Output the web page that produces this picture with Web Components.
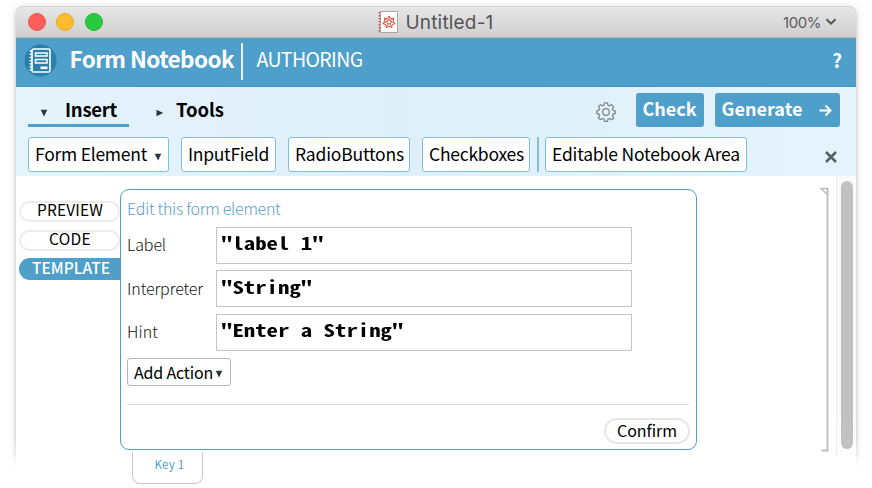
<!DOCTYPE html>
<html lang="en">
<head>
<meta charset="utf-8">
<title>Form Notebook</title>
<style>
html,body{margin:0;height:488px;overflow:hidden;background:#fff}
body{font-family:"Noto Sans CJK JP","Noto Sans",sans-serif;color:#000}
</style>
</head>
<body>
<notebook-app></notebook-app>
<script>
/* A one-line text tracked (or, with "stretch", widened) to a given advance width; its box is centred on the capitals. */
class FitText extends HTMLElement{
  connectedCallback(){
    this.attachShadow({mode:'open'}).innerHTML=`<style>
      :host{display:block;flex:none;line-height:1;padding-bottom:.14em;white-space:pre}
      span{display:inline-block;white-space:pre;transform-origin:0 50%}</style><span></span>`;
    const s=this.shadowRoot.querySelector('span');
    s.textContent=this.getAttribute('text');
    const w=+this.getAttribute('w');
    if(w){
      const n=s.getBoundingClientRect().width;
      if(this.hasAttribute('stretch')) s.style.transform=`scaleX(${w/n})`;
      else s.style.letterSpacing=((w-n)/s.textContent.length)+'px';
      this.style.width=w+'px';
    }
  }
}
customElements.define('fit-text',FitText);

const define=(name,html)=>customElements.define(name,class extends HTMLElement{
  connectedCallback(){
    const a=k=>this.getAttribute(k)||'';
    this.attachShadow({mode:'open'}).innerHTML=typeof html==='function'?html(a):html;
  }
});

define('title-bar',`<style>
:host{display:flex;height:32px;box-sizing:border-box;align-items:center;background:linear-gradient(#e6e6e6,#cfcfcf);
 border-top:1px solid #d2d2d2;border-bottom:1px solid #b9b5b2;border-radius:6px 6px 0 0;padding:0 19px 0 11.500px;font-family:Inter,sans-serif;color:#555}
i{width:18px;height:18px;border-radius:50%;margin-right:10.900px;box-sizing:border-box}
.r{background:#fc5f59;border:1px solid #ec5550}.y{background:#fdbc30;border:1px solid #eaa92c}.g{background:#29ca40;border:1px solid #22b636}
.doc{margin-left:264.300px;margin-right:6px;flex:none}
.t{font-size:19px;padding:1px 0 0}.z{font-size:15px;margin-left:auto;margin-right:4px;color:#5b5b5b;padding:1px 0 0}
</style><i class="r"></i><i class="y"></i><i class="g"></i>
<svg class="doc" width="21" height="24" viewBox="0 0 21 24"><rect x="2.5" y="1.5" width="17" height="21" fill="#fff" stroke="#a9a9a9"/>
<path d="M1.500 2v20" stroke="#d33b2f" stroke-width="1.500" stroke-dasharray="1.600 1.400"/>
<g transform="translate(11 12)" fill="none" stroke="#df4034" stroke-width=".9"><path d="M0-6 1.700-3.400 4.700-3.800 4.200-.9 6 1.700 3.300 2.700 2.700 5.500 0 4.300-2.700 5.500-3.300 2.700-6 1.700-4.200-.9-4.700-3.800-1.700-3.400Z"/><path d="M0-6V-2M2-.7 6 1.700M-2-.7-6 1.700M1 1.700 2.700 5.500M-1 1.700-2.700 5.500M-4.700-3.800-1.500-1.500M4.700-3.800 1.500-1.500"/><circle r="2"/></g></svg>
<fit-text class="t" text="Untitled-1" w="88"></fit-text>
<fit-text class="z" text="100%" w="38"></fit-text>
<svg width="12" height="10" viewBox="0 0 12 10"><path d="M1.500 2.200 6 6.700l4.500-4.500" fill="none" stroke="#555" stroke-width="2"/></svg>`);

define('brand-bar',`<style>
:host{display:flex;height:49px;box-sizing:border-box;align-items:center;background:#4e9fca;border-bottom:1px solid #4396c4;color:#fff;padding:0 14px 2px 7.500px}
svg{flex:none;margin-top:-1px}
.a{font-size:22.500px;font-weight:700;margin:0 7px 0 13px;padding-bottom:calc(.14em + 3px)}
hr{width:1.500px;height:37px;border:0;margin:0;background:#e5f2f8}
.b{font-size:19.500px;margin-left:14px;padding-bottom:calc(.14em + 2px)}
.q{font-size:19px;font-weight:700;margin-left:auto}
</style><svg width="33" height="33" viewBox="0 0 33 33"><circle cx="16.500" cy="16.500" r="16" fill="#2b7fad"/>
<rect x="8" y="5" width="18" height="23" rx="1.500" fill="none" stroke="#fff" stroke-width="1.600"/>
<path d="M5.500 7h3M5.500 10.200h3M5.500 13.400h3M5.500 16.600h3M5.500 19.800h3M5.500 23h3M5.500 26h3" stroke="#fff" stroke-width="1.300"/>
<path d="M11.500 9h11.500v3H11.500zM11.500 15.500h11.500v3.500H11.500z" fill="none" stroke="#fff" stroke-width="1.500"/><path d="M16.500 22.500h7v2.600h-7z" fill="#fff"/></svg>
<fit-text class="a" text="Form Notebook" w="164.500"></fit-text><hr>
<fit-text class="b" text="AUTHORING" w="106"></fit-text>
<fit-text class="q" text="?"></fit-text>`);

define('tri-mark',a=>`<style>:host{display:block;flex:none;line-height:0}</style>
<svg width="8" height="8" viewBox="0 0 8 8"><path d="${a('dir')==='right'?'M.5.700 7.300 4 .5 7.300Z':'M.700.800h6.600L4 7.600Z'}" fill="#2e3538"/></svg>`);

define('menu-row',`<style>
:host{display:flex;height:46px;box-sizing:border-box;align-items:flex-start;padding:6px 16px 0 12px;color:#fff;font-size:18px}
.tab{display:flex;align-items:center;box-sizing:border-box;height:34px;color:#000;font-size:18.500px;font-weight:700}
.ins{width:101px;border-bottom:3px solid #4e9fca;padding:4px 0 0 12px}
.tools{margin-left:27px;padding:3px 0 0 0;height:33px}
.ins fit-text{margin-left:17px}.ins tri-mark{margin-top:4px}.tools fit-text{margin-left:12px}.tools tri-mark{margin-top:3px}
.gear{margin:9px 20px 0 auto}
.b{display:flex;align-items:center;height:34px;box-sizing:border-box;border-radius:3px;background:#4e9fca;font-weight:700;padding:0 8px 2px 6.500px}
.c{width:68px;margin-right:11px}.g{width:125px;justify-content:space-between}
</style><div class="tab ins"><tri-mark></tri-mark><fit-text text="Insert" w="52"></fit-text></div>
<div class="tab tools"><tri-mark dir="right"></tri-mark><fit-text text="Tools" w="48"></fit-text></div>
<svg class="gear" width="20" height="20" viewBox="0 0 20 20" fill="none" stroke="#81888c" stroke-width="1.300" stroke-linejoin="round"><circle cx="10" cy="10" r="3.300"/>
<path d="M8.500.9h3l.5 2.200 1.600.7 2-1.200 2 2-1.200 2 .7 1.700 2.100.5v2.700l-2.100.5-.7 1.700 1.200 2-2 2-2-1.200-1.600.7-.5 2.100h-3L8 17.200l-1.600-.7-2 1.200-2-2 1.200-2-.7-1.700-2.100-.5V8.800l2.100-.5.700-1.700-1.200-2 2-2 2 1.200L8 3.100Z"/></svg>
<div class="b c"><fit-text text="Check" w="54"></fit-text></div>
<div class="b g"><fit-text text="Generate" w="81"></fit-text><svg style="margin-top:3px" width="13" height="13" viewBox="0 0 13 13"><path d="M.5 6.500h10.500M6.500 1.500l5 5-5 5" fill="none" stroke="#fff" stroke-width="2"/></svg></div>`);

define('insert-row',`<style>
:host{display:flex;height:43px;box-sizing:border-box;padding:4px 19px 0 12px;font-size:17.500px}
.b{display:flex;align-items:center;height:35px;box-sizing:border-box;border:1.500px solid #7cc1e4;border-radius:3px;background:#fff;padding:0 6px;margin-right:12px;flex:none}
.s{width:1.500px;height:35px;background:#7cc1e4;margin:0 6.500px 0 -5px}
.x{margin:14px 0 0 auto}
</style><div class="b" style="width:141px;justify-content:space-between"><fit-text text="Form Element" w="112"></fit-text><tri-mark style="margin-top:4px"></tri-mark></div>
<div class="b" style="width:95px"><fit-text text="InputField" w="81"></fit-text></div>
<div class="b" style="width:122px"><fit-text text="RadioButtons" w="109"></fit-text></div>
<div class="b" style="width:108px"><fit-text text="Checkboxes" w="95"></fit-text></div>
<div class="s"></div>
<div class="b" style="width:201.500px"><fit-text text="Editable Notebook Area" w="188"></fit-text></div>
<svg class="x" width="12" height="12" viewBox="0 0 12 12"><path d="M1 1l10 10M11 1 1 11" stroke="#565d62" stroke-width="2.500"/></svg>`);

define('side-tab',a=>`<style>
:host{display:flex;box-sizing:border-box;height:21px;margin-bottom:8px;width:101px;border:2px solid #ececec;border-radius:11px;justify-content:center;align-items:center;font-size:15.500px;background:#fff}
:host([on]){height:22px;background:#4e9fca;color:#fff;border-color:#4e9fca;border-radius:11px 0 0 11px;width:103px;margin-top:-1px;font-weight:500}
fit-text{margin-top:-1px;margin-left:1px}</style><fit-text text="${a('label')}" w="${a('w')}"></fit-text>`);

define('form-row',a=>`<style>
:host{display:flex;align-items:center;height:37px;margin-bottom:6.500px}
.l{font-size:16px;font-weight:300;color:#111}
.box{margin-left:auto;width:416px;height:37px;box-sizing:border-box;border:1px solid #c4c4c4;display:flex;align-items:center;padding-left:4px}
.box fit-text{font:700 17.500px "Noto Sans Mono CJK JP","DejaVu Sans Mono",monospace;line-height:1;margin-top:-2px}
</style><fit-text class="l" text="${a('label')}" w="${a('w')}"></fit-text>
<div class="box"><fit-text stretch text='${a('value')}' w="${a('value').length*11.4}"></fit-text></div>`);

define('edit-panel',`<style>
:host{display:block;width:577px;height:261px;box-sizing:border-box;border:1.500px solid #4e9fca;border-radius:9px;padding:10px 6px 0 6px;background:#fff}
.h{color:#559fca;font-weight:300;font-size:16px;margin-bottom:8.500px}
form-row{width:505px}
.add{display:flex;align-items:center;justify-content:space-between;box-sizing:border-box;width:104px;height:28px;border:1.500px solid #b5b5b5;border-radius:3px;padding:0 7px 0 6px;font-size:16px;margin-top:7px}
.add fit-text{margin-top:2px}
hr{border:0;height:1px;background:#dedede;margin:18px 1px 13px 0}
.ok{display:flex;align-items:center;justify-content:center;width:86px;height:26px;box-sizing:border-box;border:2px solid #e6e6e6;border-radius:13px;margin-left:auto;font-size:16px}
</style><fit-text class="h" text="Edit this form element" w="153.500"></fit-text>
<form-row label="Label" w="39" value='"label 1"'></form-row>
<form-row label="Interpreter" w="76" value='"String"'></form-row>
<form-row label="Hint" w="31" value='"Enter a String"'></form-row>
<div class="add"><fit-text text="Add Action" w="79"></fit-text><tri-mark style="margin-top:4px"></tri-mark></div><hr>
<div class="ok"><fit-text text="Confirm" w="60"></fit-text></div>`);

define('notebook-body',`<style>
:host{display:flex;height:312px;background:#fff}
.tabs{width:104px;box-sizing:border-box;padding:25px 0 0 3px;flex:none}
.mid{width:577px;padding-top:13px;flex:none}
.key{box-sizing:border-box;width:71px;height:32px;margin:2px 0 0 12px;border:1.500px solid #c8c8c8;border-top:0;border-radius:0 0 8px 8px;display:flex;justify-content:center;padding:7px 0 0 4px;color:#4e9fca;font-size:11.500px}
.br{margin:11px 7px 0 auto;flex:none}
.track{width:20px;box-sizing:border-box;height:280px;border-left:1px solid #ececec;background:linear-gradient(#fafafa 85%,#fff);padding:5px 3px 0 4px}
.track div{height:268px;width:12px;border-radius:6px;background:#c1c1c1}
</style><div class="tabs"><side-tab label="PREVIEW" w="66"></side-tab><side-tab label="CODE" w="42"></side-tab><side-tab on label="TEMPLATE" w="78"></side-tab></div>
<div class="mid"><edit-panel></edit-panel><div class="key"><fit-text text="Key 1" w="30"></fit-text></div></div>
<svg class="br" width="9" height="265" viewBox="0 0 9 265" fill="none" stroke="#bbb"><path d="M7.500 1v262.500H1.500" stroke-width="1.800"/><path d="M1 1.500h6.500v6Z" stroke-width="1.300"/></svg>
<div class="track"><div></div></div>`);

define('notebook-app',`<style>
:host{display:grid;width:872px;height:488px;overflow:hidden}
.shade,.win{grid-area:1/1}
.shade{margin:7px 16px 0 16px;height:460px;box-shadow:0 0 10px rgba(0,0,0,.13),0 3px 4px rgba(0,0,0,.2);border-radius:7px}
.m{grid-area:1/1;height:488px;-webkit-mask-image:linear-gradient(#000 440px,transparent 470px);mask-image:linear-gradient(#000 440px,transparent 470px)}
.win{position:relative;margin:6px 16px 0 16px;height:482px;overflow:hidden}
.tool{background:linear-gradient(90deg,#e5f3fb,#dfeff9 45%,#e5f4fc)}
</style><div class="m"><div class="shade"></div></div>
<div class="win"><title-bar></title-bar><brand-bar></brand-bar><div class="tool"><menu-row></menu-row><insert-row></insert-row></div><notebook-body></notebook-body></div>`);
</script>
</body>
</html>
